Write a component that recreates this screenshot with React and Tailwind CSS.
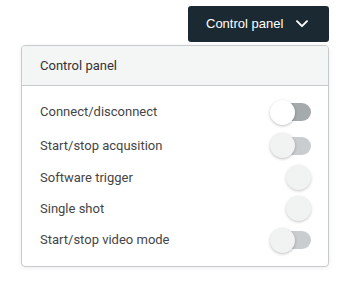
function Toggle({ kind }) {
  if (kind === "circle") {
    return (
      <div className="w-[41px] h-[25px] flex justify-end">
        <div className="w-[25px] h-[25px] rounded-full bg-[#f1f2f2] shadow-[0_1px_3px_rgba(0,0,0,0.22)]" />
      </div>
    );
  }
  const on = kind === "active";
  return (
    <div className="relative w-[41px] h-[25px]">
      <div
        className={
          "absolute right-0 top-[3.5px] w-[38px] h-[18px] rounded-full " +
          (on ? "bg-[#a5aaad]" : "bg-[#c9cdd0]")
        }
      />
      <div
        className={
          "absolute left-0 top-0 w-[25px] h-[25px] rounded-full shadow-[0_1px_3px_rgba(0,0,0,0.25)] " +
          (on ? "bg-white" : "bg-[#f1f2f2]")
        }
      />
    </div>
  );
}

const rows = [
  { label: "Connect/disconnect", kind: "active", h: "h-[34px]" },
  { label: "Start/stop acqusition", kind: "off", h: "h-[33px]" },
  { label: "Software trigger", kind: "circle", h: "h-[31px]" },
  { label: "Single shot", kind: "circle", h: "h-[31px]" },
  { label: "Start/stop video mode", kind: "off", h: "h-[32px]" },
];

export default function App() {
  return (
    <div className="relative w-[357px] h-[290px] bg-white overflow-hidden">
      <div className="flex justify-end pt-[6px] pr-[28px]">
        <button
          className="w-[141px] h-[36px] bg-[#1b2a32] rounded-[3px] flex items-center pl-[18px] gap-[13px] text-white text-[13px]"
          style={{ fontFamily: '"Liberation Sans", Arial, sans-serif' }}
        >
          <span>Control panel</span>
          <svg width="12" height="8" viewBox="0 0 12 8" fill="none">
            <path d="M1 1.2 L6 6.2 L11 1.2" stroke="white" strokeWidth="1.9" strokeLinecap="round" strokeLinejoin="round" />
          </svg>
        </button>
      </div>
      <div
        className="absolute left-[21px] top-[45px] w-[308px] h-[222px] bg-white border border-[#c8cbcd] rounded-[4px] shadow-[0_1px_4px_rgba(0,0,0,0.08)] overflow-hidden"
        style={{ fontFamily: 'Roboto, "Noto Sans", sans-serif' }}
      >
        <div className="h-[40px] bg-[#f4f5f5] border-b border-[#c8cbcd] flex items-center pl-[18px] text-[13px] text-[#333]">
          Control panel
        </div>
        <div className="pt-[9px]">
          {rows.map((r) => (
            <div key={r.label} className={"flex items-center justify-between pl-[18px] pr-[17px] " + r.h}>
              <span className="text-[13px] text-[#454545]">{r.label}</span>
              <Toggle kind={r.kind} />
            </div>
          ))}
        </div>
      </div>
    </div>
  );
}
